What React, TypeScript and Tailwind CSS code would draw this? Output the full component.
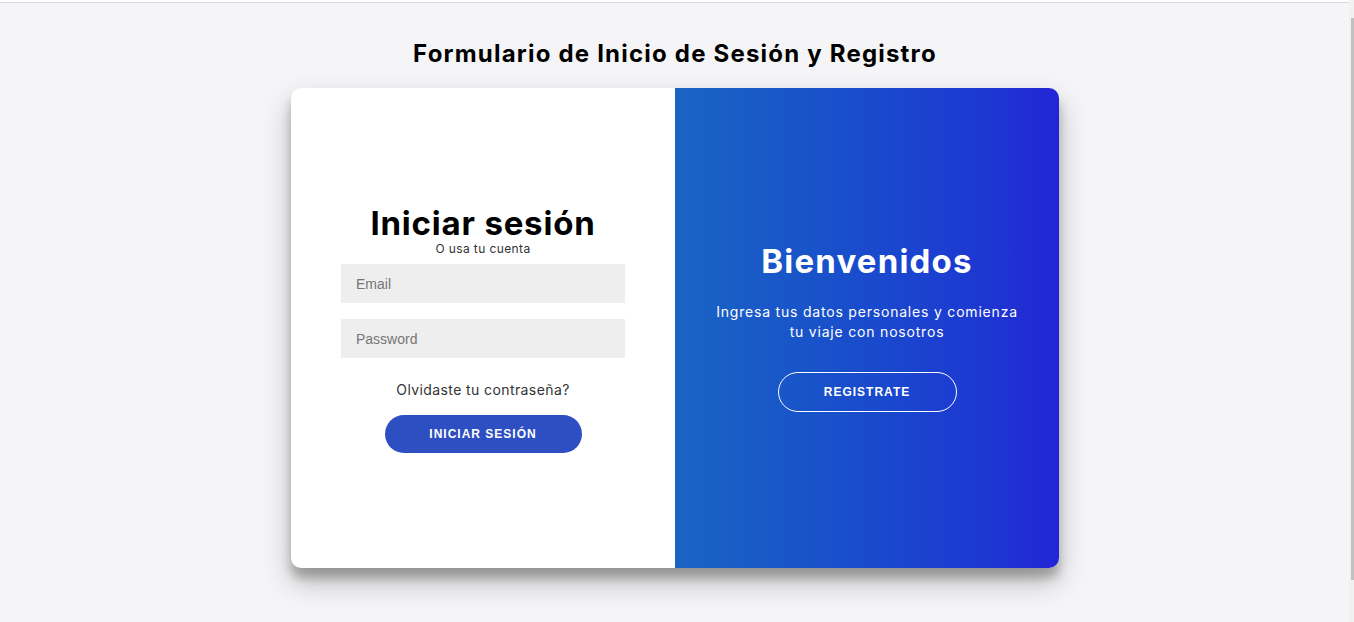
export default function App() {
    return (
        <div className="relative min-h-[622px] bg-[#f5f5f7] font-['Inter',sans-serif] border-t border-[#d9d9dd] mt-[2px]">
            {/* Fake scrollbar */}
            <div className="fixed right-0 top-0 h-full w-[5px] bg-[#f1f1f1]">
                <div className="absolute right-0 top-[18px] h-[562px] w-[3px] bg-[#c1c1c1]" />
            </div>

            <div className="flex flex-col items-center pt-[36px] pr-[4px]">
                <h2 className="text-[24px] font-bold leading-[30px] text-black tracking-[1.2px]">
                    Formulario de Inicio de Sesión y Registro
                </h2>

                <div className="mt-[19px] flex w-[768px] h-[480px] rounded-[10px] overflow-hidden bg-white shadow-[0_14px_28px_rgba(0,0,0,0.25),0_10px_10px_rgba(0,0,0,0.22)]">
                    {/* Sign in */}
                    <form className="w-1/2 flex flex-col items-center justify-center px-[50px] pt-[2px]" onSubmit={(e) => e.preventDefault()}>
                        <h1 className="text-[33px] font-bold leading-[36px] text-black tracking-[0.8px]">Iniciar sesión</h1>
                        <span className="text-[12px] leading-[16px] text-[#333] tracking-[0.4px]">O usa tu cuenta</span>
                        <input
                            type="email"
                            placeholder="Email"
                            className="mt-[7px] w-full h-[39px] bg-[#eee] px-[15px] text-[14px] font-['Liberation_Sans',sans-serif] placeholder:text-[#757575] outline-none"
                        />
                        <input
                            type="password"
                            placeholder="Password"
                            className="mt-[16px] w-full h-[39px] bg-[#eee] px-[15px] text-[14px] font-['Liberation_Sans',sans-serif] placeholder:text-[#757575] outline-none"
                        />
                        <a href="#" className="mt-[22px] text-[14px] leading-[20px] text-[#333] tracking-[0.4px]">Olvidaste tu contraseña?</a>
                        <button className="mt-[15px] w-[197px] h-[38px] rounded-full bg-[#2d4fc2] text-white text-[12px] font-bold tracking-[1px] font-['Liberation_Sans',sans-serif]">
                            INICIAR SESIÓN
                        </button>
                    </form>

                    {/* Overlay */}
                    <div className="w-1/2 flex flex-col items-center justify-center px-[30px] text-white bg-gradient-to-r from-[#1b64c3] to-[#2125d5] pb-[4px]">
                        <h1 className="text-[33px] font-bold leading-[40px] tracking-[1.2px]">Bienvenidos</h1>
                        <p className="mt-[21px] text-[14px] leading-[20px] text-center tracking-[0.8px]">
                            Ingresa tus datos personales y comienza<br />tu viaje con nosotros
                        </p>
                        <button className="mt-[30px] w-[179px] h-[40px] rounded-full border border-white text-white text-[12px] font-bold tracking-[1px] font-['Liberation_Sans',sans-serif]">
                            REGISTRATE
                        </button>
                    </div>
                </div>
            </div>
        </div>
    )
}
